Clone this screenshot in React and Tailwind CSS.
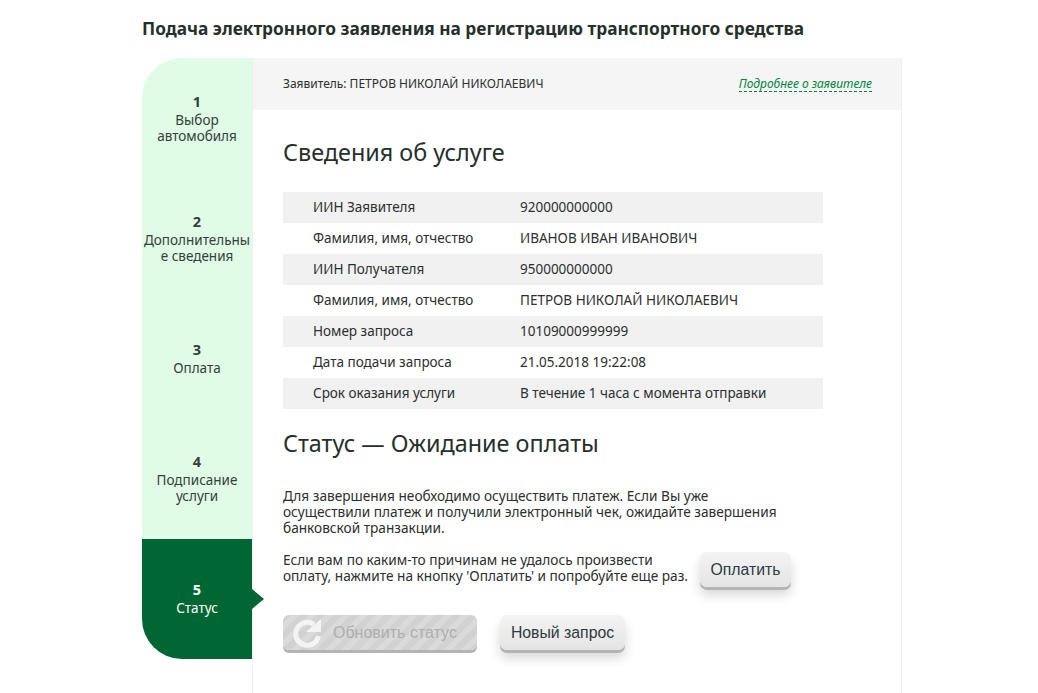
import React from "react";

const steps = [
  { n: 1, label: ["Выбор", "автомобиля"] },
  { n: 2, label: ["Дополнительны", "е сведения"] },
  { n: 3, label: ["Оплата"] },
  { n: 4, label: ["Подписание", "услуги"] },
  { n: 5, label: ["Статус"], active: true },
];

const rows = [
  ["ИИН Заявителя", "920000000000"],
  ["Фамилия, имя, отчество", "ИВАНОВ ИВАН ИВАНОВИЧ"],
  ["ИИН Получателя", "950000000000"],
  ["Фамилия, имя, отчество", "ПЕТРОВ НИКОЛАЙ НИКОЛАЕВИЧ"],
  ["Номер запроса", "10109000999999"],
  ["Дата подачи запроса", "21.05.2018 19:22:08"],
  ["Срок оказания услуги", "В течение 1 часа с момента отправки"],
];

function Sidebar() {
  return (
    <div className="w-[110px] shrink-0 self-start">
      {steps.map((s) => (
        <div
          key={s.n}
          className={`relative flex h-[120px] flex-col items-center justify-center pb-[2px] text-center text-[13.5px] leading-4 first:h-[121px] first:pb-0 first:rounded-tl-[40px] last:rounded-bl-[40px] ${
            s.active ? "bg-[#006633] text-white" : "bg-[#e0fbe6] text-[#333f3a]"
          }`}
        >
          <div className="mb-[3px] text-[14.5px] font-bold">{s.n}</div>
          {s.label.map((line) => (
            <div key={line} className="whitespace-nowrap">{line}</div>
          ))}
          {s.active && (
            <div className="absolute left-full top-[50px] h-0 w-0 border-y-[10px] border-l-[12px] border-y-transparent border-l-[#006633]" />
          )}
        </div>
      ))}
    </div>
  );
}

function GrayButton({ children, className = "" }) {
  return (
    <button
      className={`h-[35px] rounded-[7px] bg-gradient-to-b from-[#f4f4f4] to-[#e4e4e4] pt-[1px] font-['Liberation_Sans',sans-serif] text-[15.8px] text-[#2b3a42] shadow-[0_3px_0_#b4b4b4,0_8px_12px_rgba(0,0,0,0.16)] ${className}`}
    >
      {children}
    </button>
  );
}

export default function App() {
  return (
    <div className="min-h-[693px] overflow-hidden bg-white font-['Noto_Sans',sans-serif] text-[#2b2f2d]">
      <div className="ml-[142px] w-[760px]">
        <h1 className="flex h-[58px] items-center pb-[1px] text-[17.3px] font-bold whitespace-nowrap text-[#26302b]">
          Подача электронного заявления на регистрацию транспортного средства
        </h1>
        <div className="flex h-[635px]">
          <Sidebar />
          <div className="flex-1 border-x border-[#eeeeee]">
            <div className="flex h-[52px] items-center justify-between bg-[#f5f5f5] pl-[30px] pr-[29px] text-[12px]">
              <div>Заявитель: ПЕТРОВ НИКОЛАЙ НИКОЛАЕВИЧ</div>
              <a className="border-b border-dashed border-[#00843d] text-[#00843d] italic leading-[15px]">
                Подробнее о заявителе
              </a>
            </div>
            <div className="pl-[30px]">
              <h2 className="mt-[25px] text-[23.4px] leading-[34px] text-[#26302b]">Сведения об услуге</h2>
              <div className="mt-[23px] w-[540px] text-[13.5px]">
                {rows.map((r, i) => (
                  <div
                    key={i}
                    className={`flex h-[31px] items-center pl-[30px] ${i % 2 === 0 ? "bg-[#f1f1f1]" : ""}`}
                  >
                    <div className="w-[207px] shrink-0">{r[0]}</div>
                    <div>{r[1]}</div>
                  </div>
                ))}
              </div>
              <h2 className="mt-[17px] text-[23.4px] leading-[34px] text-[#26302b]">Статус — Ожидание оплаты</h2>
              <p className="mt-[28px] w-[500px] text-[13.65px] leading-4">
                Для завершения необходимо осуществить платеж. Если Вы уже осуществили платеж и получили электронный чек, ожидайте завершения банковской транзакции.
              </p>
              <div className="mt-[16px] flex items-start">
                <p className="w-[417px] shrink-0 text-[13.65px] leading-4">
                  Если вам по каким-то причинам не удалось произвести оплату, нажмите на кнопку 'Оплатить' и попробуйте еще раз.
                </p>
                <GrayButton className="w-[91px]">Оплатить</GrayButton>
              </div>
              <div className="mt-[28px] flex gap-[23px]">
                <button className="flex h-[35px] w-[194px] items-center gap-[11px] rounded-[6px] bg-[repeating-linear-gradient(135deg,#d2d2d2_0,#d2d2d2_6px,#dadada_6px,#dadada_12px)] pl-[9px] font-['Liberation_Sans',sans-serif] text-[16px] text-[#aeaeae] shadow-[0_3px_0_#b4b4b4]">
                  <svg width="30" height="30" viewBox="0 0 30 30" fill="none">
                    <path d="M22 6.5A11.5 11.5 0 1 0 26.5 18" stroke="#f4f4f4" strokeWidth="5" />
                    <path d="M29 1v13H14z" fill="#f4f4f4" />
                  </svg>
                  <span>Обновить статус</span>
                </button>
                <GrayButton className="w-[125px]">Новый запрос</GrayButton>
              </div>
            </div>
          </div>
        </div>
      </div>
    </div>
  );
}
